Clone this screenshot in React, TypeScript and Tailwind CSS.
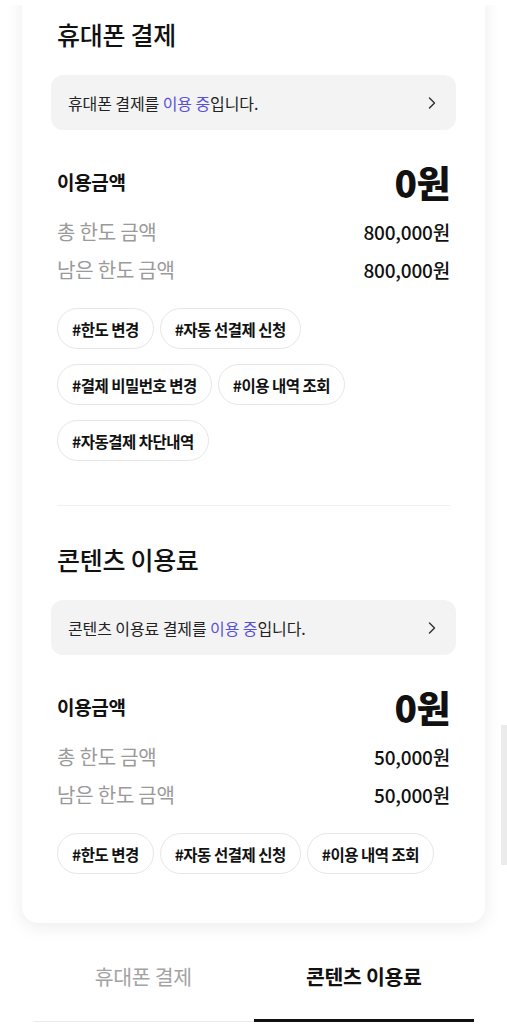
import { ChevronRight } from "lucide-react"

const font = { fontFamily: '"Noto Sans CJK KR", "Noto Sans", sans-serif' }

type Section = {
  title: string
  lead: string
  total: string
  remain: string
  tags: string[]
}

const sections: Section[] = [
  {
    title: "휴대폰 결제",
    lead: "휴대폰 결제를",
    total: "800,000원",
    remain: "800,000원",
    tags: ["#한도 변경", "#자동 선결제 신청", "#결제 비밀번호 변경", "#이용 내역 조회", "#자동결제 차단내역"],
  },
  {
    title: "콘텐츠 이용료",
    lead: "콘텐츠 이용료 결제를",
    total: "50,000원",
    remain: "50,000원",
    tags: ["#한도 변경", "#자동 선결제 신청", "#이용 내역 조회"],
  },
]

function PaySection({ data, first }: { data: Section; first?: boolean }) {
  return (
    <section className={first ? "pt-[34px]" : "pt-[38px] border-t border-[#f0f0f0] mx-[6px]"}>
      <h2 className={`text-[25px] leading-[30px] font-medium text-[#111] tracking-[-0.3px] ${first ? "px-[6px]" : ""}`}>
        {data.title}
      </h2>
      <button
        className={`mt-[26px] flex h-[55px] items-center justify-between rounded-[12px] bg-[#f3f3f3] pl-[17px] pr-[14px] text-left ${first ? "w-full" : "w-[calc(100%+12px)] -mx-[6px]"}`}
      >
        <span className="text-[16px] leading-[24px] text-[#222] tracking-[-0.1px]">
          {data.lead} <span className="text-[#5a52d5]">이용 중</span>입니다.
        </span>
        <ChevronRight className="h-[20px] w-[20px] text-[#333]" strokeWidth={1.7} />
      </button>
      <div className={first ? "px-[6px]" : ""}>
        <div className="mt-[28px] flex items-center justify-between">
          <span className="text-[19px] leading-[28px] font-bold text-[#111] tracking-[-0.3px]">이용금액</span>
          <span className="text-[37px] leading-[48px] font-extrabold text-[#111] tracking-[-0.5px]">0원</span>
        </div>
        <div className="mt-[12px] flex items-center justify-between">
          <span className="text-[20px] leading-[27px] text-[#9a9a9a] tracking-[-0.2px]">총 한도 금액</span>
          <span className="text-[19px] leading-[27px] font-medium text-[#111] tracking-[-0.2px]">{data.total}</span>
        </div>
        <div className="mt-[11px] flex items-center justify-between">
          <span className="text-[20px] leading-[27px] text-[#9a9a9a] tracking-[-0.2px]">남은 한도 금액</span>
          <span className="text-[19px] leading-[27px] font-medium text-[#111] tracking-[-0.2px]">{data.remain}</span>
        </div>
        <div className="mt-[25px] flex flex-wrap gap-x-[6px] gap-y-[15px]">
          {data.tags.map((t) => (
            <span
              key={t}
              className="flex h-[41px] items-center rounded-full border border-[#e6e6e6] px-[14px] text-[15.5px] leading-[22px] font-bold text-[#111] tracking-[-0.5px]"
            >
              {t}
            </span>
          ))}
        </div>
      </div>
    </section>
  )
}

export default function App() {
  return (
    <div className="relative h-[1024px] w-full overflow-hidden bg-white" style={font}>
      <div className="mt-[5px] overflow-hidden pb-[18px]">
        <div className="mx-[22px] -mt-[20px] rounded-[16px] bg-white px-[29px] pb-[49px] shadow-[0_4px_18px_rgba(0,0,0,0.08)]">
          <PaySection data={sections[0]} first />
          <div className="h-[44px]" />
          <PaySection data={sections[1]} />
        </div>
      </div>
      <nav className="mx-[33px] grid grid-cols-2">
        <div className="flex h-[81px] flex-col">
          <span className="pt-[23px] text-center text-[20.5px] leading-[24px] text-[#a3a3a3] tracking-[-0.3px]">휴대폰 결제</span>
          <div className="mt-auto h-[1px] bg-[#ebebeb]" />
        </div>
        <div className="flex h-[81px] flex-col">
          <span className="pt-[23px] text-center text-[20.5px] leading-[24px] font-bold text-[#111] tracking-[-0.3px]">콘텐츠 이용료</span>
          <div className="mt-auto h-[3px] bg-[#111]" />
        </div>
      </nav>
      <div className="absolute right-0 top-[725px] h-[140px] w-[6px] bg-[#ebebeb]" />
    </div>
  )
}
